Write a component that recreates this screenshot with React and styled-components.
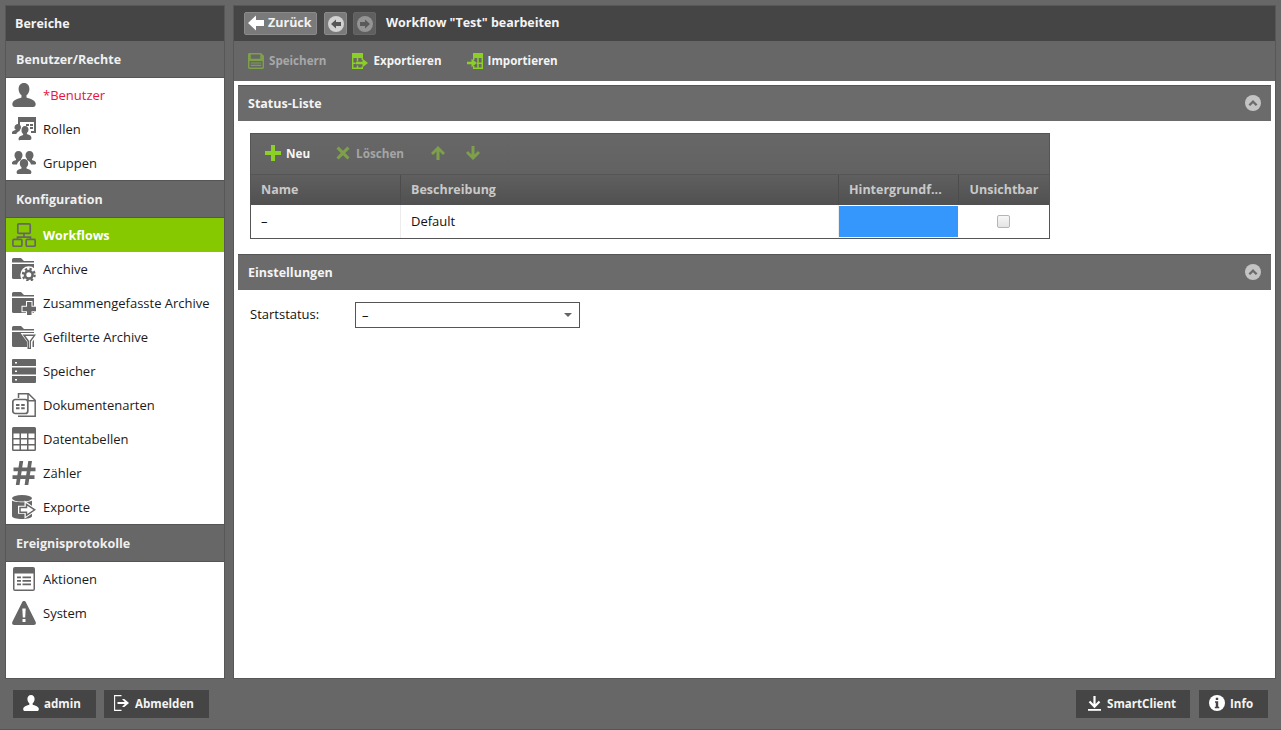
import React from "react";
import styled, { createGlobalStyle } from "styled-components";

const Global = createGlobalStyle`
  html, body { margin: 0; padding: 0; overflow: hidden; }
  body { background: #676767; font-family: "Open Sans", "Liberation Sans", sans-serif; font-size: 13px; color: #111; }
  * { box-sizing: border-box; }
`;

const Page = styled.div`
  width: 1281px; height: 730px; display: flex; flex-direction: column;
  background: #676767; border-bottom: 1px solid #555;
`;
const Workspace = styled.div`
  display: flex; gap: 8px; padding: 5px 5px 0 5px; height: 679px;
`;
const Sidebar = styled.aside`
  width: 220px; display: flex; flex-direction: column; background: #fff; border: 1px solid #575757;
`;
const TopTitle = styled.div`
  height: 35px; flex: none; display: flex; align-items: center; padding: 0 0 1px 9px;
  background: #454545; color: #f4f4f4; font-weight: 700; font-size: 12.5px;
`;
const Group = styled.div`
  height: ${p => p.$h}px; flex: none; display: flex; align-items: center; padding-left: 10px;
  background: #676767; color: #f0f0f0; font-weight: 700; font-size: 12.5px;
  border-bottom: 1px solid #555; ${p => p.$top ? "border-top: 1px solid #555;" : ""}
`;
const Item = styled.div`
  height: 34px; flex: none; display: flex; align-items: center; gap: 7px; padding-left: 6px;
  font-size: 13px; color: ${p => p.$red ? "#e8143c" : "#1a1a1a"};
  ${p => p.$active ? "background: #86c900; color: #fff; font-weight: 700; font-size: 12.5px;" : ""}
`;
const NavIcon = styled.svg`
  width: 24px; height: 24px; flex: none; fill: #666; display: block;
`;
const Main = styled.main`
  width: 1043px; display: flex; flex-direction: column; background: #fff; border: 1px solid #575757;
`;
const TitleBar = styled.div`
  height: 35px; flex: none; display: flex; align-items: center; padding-left: 10px;
  background: #454545;
`;
const BackButton = styled.div`
  width: 73px; height: 23px; display: flex; align-items: center; gap: 4px; padding: 0 0 2px 3px;
  background: #7a7a7a; border: 1px solid #8a8a8a; border-radius: 2px;
  color: #f2f2f2; font-weight: 700; font-size: 12.5px;
`;
const NavRound = styled.div`
  width: 23px; height: 23px; margin-left: ${p => p.$ml}px; display: flex; align-items: center; justify-content: center;
  background: ${p => p.$off ? "#5f5f5f" : "#7a7a7a"}; border: 1px solid ${p => p.$off ? "#666" : "#8a8a8a"}; border-radius: 2px;
`;
const PageTitle = styled.div`
  margin: 0 0 2px 10px; color: #f4f4f4; font-weight: 700; font-size: 12.5px;
`;
const ToolBar = styled.div`
  height: 40px; flex: none; display: flex; align-items: center; padding: 0 0 1px 14px; background: #676767;
`;
const ToolButton = styled.div`
  display: flex; align-items: center; gap: 5px; margin-right: ${p => p.$mr}px;
  font-weight: 700; font-size: 11.6px; color: ${p => p.$off ? "#a8a8a8" : "#f4f4f4"};
`;
const Content = styled.div`
  flex: 1; padding: 4px 4px 0 4px; display: flex; flex-direction: column;
`;
const PanelHead = styled.div`
  height: 36px; flex: none; display: flex; align-items: center; justify-content: space-between; padding: 0 10px 1px;
  background: #6b6b6b; border-top: 1px solid #555; color: #f4f4f4; font-weight: 700; font-size: 12.5px;
`;
const PanelBody = styled.div`
  padding: 12px 12px 15px;
`;
const Grid = styled.div`
  width: 800px; border: 1px solid #555;
`;
const GridTools = styled.div`
  height: 41px; display: flex; align-items: center; padding: 0 0 2px 14px;
  background: linear-gradient(#676767, #626262); border-bottom: 1px solid #555;
`;
const GridButton = styled.div`
  display: flex; align-items: center; gap: ${p => p.$g ?? 5}px; margin-right: ${p => p.$mr}px;
  font-weight: 700; font-size: 11.7px; color: ${p => p.$off ? "#a5a5a5" : "#f6f6f6"};
`;
const GridRow = styled.div`
  display: grid; grid-template-columns: 150px 438px 120px 90px;
`;
const HeadCell = styled.div`
  height: 30px; display: flex; align-items: center; padding-bottom: 1px;
  padding-left: ${p => p.$center ? 0 : 10}px; justify-content: ${p => p.$center ? "center" : "flex-start"};
  background: linear-gradient(#5f5f5f, #505050); color: #c9c9c9; font-weight: 700; font-size: 12.5px;
  border-right: ${p => p.$last ? 0 : 1}px solid #4c4c4c;
`;
const Cell = styled.div`
  height: 33px; display: flex; align-items: center; padding: 0 0 2px 10px; font-size: 13px; color: #111;
  border-right: ${p => p.$last ? 0 : 1}px solid #ececec; background: #fff;
`;
const ColorCell = styled.div`
  height: 33px; border: 1px solid #fff; border-left: 0; background: #3596fb;
`;
const CheckCell = styled.div`
  height: 33px; display: flex; align-items: center; justify-content: center; padding-right: 2px; background: #fff;
`;
const CheckBox = styled.div`
  width: 13px; height: 13px; border: 1px solid #b5b5b5; border-radius: 2px; background: linear-gradient(#f7f7f7, #e4e4e4);
`;
const FormRow = styled.div`
  display: flex; align-items: center; height: 26px;
`;
const FieldLabel = styled.div`
  width: 105px; font-size: 13px; color: #111; margin-bottom: 2px;
`;
const Select = styled.div`
  width: 225px; height: 26px; display: flex; align-items: center; justify-content: space-between;
  border: 1px solid #555; padding: 0 7px 0 6px; font-size: 13px; color: #111;
`;
const Caret = styled.div`
  width: 0; height: 0; border-left: 4.5px solid transparent; border-right: 4.5px solid transparent; border-top: 4.5px solid #666;
`;
const Footer = styled.footer`
  height: 50px; display: flex; align-items: center; justify-content: space-between; padding: 0 13px;
`;
const FootGroup = styled.div`
  display: flex; gap: ${p => p.$gap}px;
`;
const FootButton = styled.div`
  height: 28px; width: ${p => p.$w}px; display: flex; align-items: center; gap: 5px; padding: 0 0 2px ${p => p.$pl}px;
  background: #454545; color: #f4f4f4; font-weight: 700; font-size: 11.6px;
`;
const Small = styled.svg`
  width: ${p => p.$s}px; height: ${p => p.$s}px; flex: none; display: block;
`;

const Ico = ({ children }) => <NavIcon viewBox="0 0 24 24">{children}</NavIcon>;
const personD = "M12 0C8.6 0 6.6 2.6 6.6 6c0 2.8 1.3 5.2 2.9 6.3v2.2C7 15.6 1.6 16.3.5 20c-.6 2.2.2 4 2.4 4h18.2c2.2 0 3-1.8 2.4-4-1.1-3.7-6.5-4.4-9-5.5v-2.2c1.6-1.1 2.9-3.5 2.9-6.3C17.400 2.600 15.400 0 12 0z";
const Folder = () => (
  <>
    <path d="M0 2.500Q0 1 1.500 1H9l3 3h10v1.500H0z" />
    <path d="M0 7h22v15H1.500A1.500 1.500 0 0 1 0 20.500z" />
  </>
);

const icons = {
  user: <Ico><path d={personD} /></Ico>,
  roles: <Ico>
    <path d="M6 0h18v16h-5v-2h3V5H8v3H6z" />
    <path d="M14 7h3v2h-3zM18 7h3v2h-3zM18 10h3v2h-3z" />
    <path d="M6 7c1.700 0 3 1.300 3 3.200 0 1.200-.6 2.300-1.300 2.800v1c-1.500.6-3 1.500-3.400 3H1c-1 0-1.300-.8-1-1.800.5-1.500 2.600-1.700 3.500-2.200v-1C2.800 12.500 2.500 11.400 2.500 10.200 2.500 8.300 4 7 6 7z" />
    <path d="M13 9c2.200 0 3.500 1.500 3.500 3.600 0 1.400-.6 2.600-1.600 3.300v1.200c1.400.6 3.900 1 4.400 2.800.4 1.600-.1 3.100-1.600 3.100H8.300C6.800 24 6.300 22.500 6.700 20.900c.5-1.800 3-2.200 4.400-2.800v-1.200c-1-.7-1.600-1.900-1.600-3.300C9.500 10.500 10.800 9 13 9z" />
  </Ico>,
  groups: <Ico>
    <path d="M6.500 0C9 0 10.500 1.800 10.500 4.200c0 1.500-.6 2.900-1.500 3.600v1.200c-1.800.8-3.600 2.100-4 4.500H1.200C0 13.500-.3 12.500 0 11.500c.6-1.800 3-2 4-2.600V7.800C3.100 7.100 2.500 5.700 2.500 4.200 2.500 1.800 4 0 6.500 0z" />
    <path d="M17.500 0C20 0 21.500 1.800 21.500 4.200c0 1.500-.6 2.900-1.500 3.600v1.100c1 .6 3.400.8 4 2.600.3 1 0 2-1.200 2H19c-.4-2.400-2.200-3.700-4-4.500V7.800c-.9-.7-1.500-2.100-1.500-3.600C13.500 1.800 15 0 17.500 0z" />
    <path d="M12 8c2.500 0 4.200 1.800 4.200 4.400 0 1.600-.7 3-1.700 3.800v1.200c1.500.7 4.300 1 4.800 3 .4 1.500-.2 2.600-1.700 2.600H6.400c-1.500 0-2.100-1.100-1.700-2.600.5-2 3.300-2.300 4.800-3v-1.200c-1-.8-1.700-2.200-1.700-3.800C7.800 9.800 9.500 8 12 8z" />
  </Ico>,
  flow: <NavIcon viewBox="0 0 24 24" style={{ fill: "none", stroke: "#666", strokeWidth: 1.7 }}>
    <rect x="5.800" y=".9" width="12.400" height="9.400" rx="1" />
    <path d="M12 10.300v3.900M5.500 16.500v-2.300h13v2.300" />
    <rect x=".9" y="16.300" width="9" height="7" rx="1.200" />
    <rect x="14.200" y="16.300" width="9" height="7" rx="1.200" />
  </NavIcon>,
  archive: <Ico>
    <Folder />
    <circle cx="16.800" cy="17.800" r="8.500" fill="#fff" />
    <circle cx="16.800" cy="17.800" r="5.800" fill="none" stroke="#666" strokeWidth="2.400" strokeDasharray="2.300 2.250" />
    <circle cx="16.800" cy="17.800" r="3.800" fill="none" stroke="#666" strokeWidth="2.600" />
  </Ico>,
  merged: <Ico>
    <Folder />
    <path d="M15 11h4.500v4.700H24v4.500h-4.500V25H15v-4.800h-4.500v-4.500H15z" stroke="#fff" strokeWidth="2" paintOrder="stroke" />
  </Ico>,
  filtered: <Ico>
    <Folder />
    <path d="M10.500 9H25l-5.500 7.500V25h-3.500v-8.500z" fill="#fff" stroke="#fff" strokeWidth="2" />
    <path fillRule="evenodd" d="M10.500 9.500H24l-5 7V24.500h-3.500v-8zM13.500 11l3.500 4.800v7h.7v-7L21.300 11z" />
  </Ico>,
  storage: <Ico>
    <path d="M1 0h22a1 1 0 0 1 1 1v6H0V1a1 1 0 0 1 1-1zM0 8.500h24v7H0zM0 17h24v6a1 1 0 0 1-1 1H1a1 1 0 0 1-1-1z" />
    <path d="M3 3h2v1.500H3zM3 11.500h2V13H3zM3 20h2v1.500H3z" fill="#fff" />
  </Ico>,
  doc: <NavIcon viewBox="0 0 24 24" style={{ fill: "none", stroke: "#666", strokeWidth: 1.5 }}>
    <path d="M6.500 5V.8h10l6.700 6.400V23.200H6" />
    <path d="M16 .8v7h7.200" />
    <rect x=".8" y="6.500" width="15" height="14" rx="2.500" fill="#fff" strokeWidth="1.700" />
    <path d="M4 12h3.500M9.200 12h3.500M4 15.200h3.500M9.200 15.200h3.500" strokeWidth="2" />
  </NavIcon>,
  table: <Ico>
    <path fillRule="evenodd" d="M1.500 0h21A1.500 1.500 0 0 1 24 1.500v21a1.500 1.500 0 0 1-1.500 1.500h-21A1.500 1.500 0 0 1 0 22.500v-21A1.500 1.500 0 0 1 1.500 0zM1.500 6.500V11h6V6.500zM9 6.500V11h6V6.500zM16.500 6.500V11h6V6.500zM1.500 12.500V17h6v-4.500zM9 12.500V17h6v-4.500zM16.500 12.500V17h6v-4.500zM1.500 18.500v4h6v-4zM9 18.500v4h6v-4zM16.500 18.500v4h6v-4z" />
  </Ico>,
  hash: <Ico>
    <path fillRule="evenodd" d="M7.500 0h3.700l-1 6.500h5.100l1-6.500H20l-1 6.500h4.500v3.700h-5l-.7 4.100h4.700V18h-5.300l-.9 6h-3.700l.9-6H8.400l-.9 6H3.800l.9-6H.5v-3.700h4.800l.7-4.100H1.500V6.500h5zM9.700 10.200l-.7 4.100h5.100l.7-4.100z" />
  </Ico>,
  exports: <Ico>
    <ellipse cx="10" cy="3.300" rx="10" ry="3.300" />
    <path d="M0 5.500c2 2.300 18 2.300 20 0V21c0 2-4.500 3-10 3S0 23 0 21z" />
    <path d="M7.500 12.200h6.500V8.500l9 6.300-9 6.200v-3.700H7.500z" fill="#fff" stroke="#fff" strokeWidth="3" />
    <path d="M8 12.500h6.500V9.300l8.200 5.500-8.200 5.500v-3.100H8z" fill="#fff" stroke="#666" strokeWidth="1.500" />
  </Ico>,
  actions: <Ico>
    <path fillRule="evenodd" d="M3 0h18a2 2 0 0 1 2 2v20a2 2 0 0 1-2 2H3a2 2 0 0 1-2-2V2a2 2 0 0 1 2-2zM2.500 6.500v16h19v-16zM5 9.500h4v1.800H5zM10.500 9.500H19v1.800h-8.500zM5 13h4v1.800H5zM10.500 13H19v1.800h-8.500zM5 16.500h4v1.800H5zM10.500 16.500H19v1.800h-8.500z" />
  </Ico>,
  warn: <Ico>
    <path fillRule="evenodd" d="M12 0c.9 0 1.500.5 2 1.400l9.600 19.400c.8 1.700 0 3.200-1.800 3.200H2.200C.4 24-.4 22.500.4 20.800L10 1.400C10.500.5 11.100 0 12 0zM10.300 7.500l.5 9h2.400l.5-9zM10.500 18v3h3v-3z" />
  </Ico>,
};

const nav = [
  { type: "top", label: "Bereiche" },
  { type: "group", label: "Benutzer/Rechte", h: 37 },
  { label: "*Benutzer", icon: "user", red: true },
  { label: "Rollen", icon: "roles" },
  { label: "Gruppen", icon: "groups" },
  { type: "group", label: "Konfiguration", h: 38, top: true },
  { label: "Workflows", icon: "flow", active: true },
  { label: "Archive", icon: "archive" },
  { label: "Zusammengefasste Archive", icon: "merged" },
  { label: "Gefilterte Archive", icon: "filtered" },
  { label: "Speicher", icon: "storage" },
  { label: "Dokumentenarten", icon: "doc" },
  { label: "Datentabellen", icon: "table" },
  { label: "Zähler", icon: "hash" },
  { label: "Exporte", icon: "exports" },
  { type: "group", label: "Ereignisprotokolle", h: 38, top: true },
  { label: "Aktionen", icon: "actions" },
  { label: "System", icon: "warn" },
];

const Collapse = () => (
  <Small $s={16} viewBox="0 0 16 16">
    <circle cx="8" cy="8" r="8" fill="#c4c4c4" />
    <path d="M3.500 9.500L8 5l4.500 4.500-1.700 1.500L8 8.300 5.200 11z" fill="#6b6b6b" />
  </Small>
);

const GREEN = "#8ccf25";
const ExportIcon = () => (
  <Small $s={16} viewBox="0 0 16 16">
    <path d="M0 0h11v5H0z" fill={GREEN} />
    <path d="M.7 5v10.300h9.600V13.500M.7 10.200h3M5.500 5v3.500M5.500 12.500v2.800M10.300 5v2" fill="none" stroke={GREEN} strokeWidth="1.500" />
    <path d="M4 8.700h6.500V5.800L16 10l-5.500 4.200v-2.900H4z" fill={GREEN} />
  </Small>
);
const ImportIcon = () => (
  <Small $s={16} viewBox="0 0 16 16">
    <path d="M6 0h10v5H6z" fill={GREEN} />
    <path d="M6.700 5v2M6.700 13v2.300h8.600V5M11 5v10.300M10 10.200h5" fill="none" stroke={GREEN} strokeWidth="1.500" />
    <path d="M0 8.700h4.500V5.800L10 10l-5.500 4.200v-2.900H0z" fill={GREEN} />
  </Small>
);

export default function App() {
  return (
    <Page>
      <Global />
      <Workspace>
        <Sidebar>
          {nav.map((n, i) => {
            if (n.type === "top") return <TopTitle key={i}>{n.label}</TopTitle>;
            if (n.type === "group") return <Group key={i} $h={n.h} $top={n.top}>{n.label}</Group>;
            return (
              <Item key={i} $red={n.red} $active={n.active}>
                {icons[n.icon]}
                <span>{n.label}</span>
              </Item>
            );
          })}
        </Sidebar>
        <Main>
          <TitleBar>
            <BackButton>
              <Small $s={16} viewBox="0 0 16 16">
                <path d="M0 8l8-7.500V5h8v6H8v4.500z" fill="#fff" />
              </Small>
              Zurück
            </BackButton>
            <NavRound $ml={7}>
              <Small $s={16} viewBox="0 0 16 16">
                <circle cx="8" cy="8" r="8" fill="#d2d2d2" />
                <path d="M3 8l5-4.500V6h5v4H8v2.500z" fill="#555" />
              </Small>
            </NavRound>
            <NavRound $ml={6} $off>
              <Small $s={16} viewBox="0 0 16 16">
                <circle cx="8" cy="8" r="8" fill="#949494" />
                <path d="M13 8L8 3.500V6H3v4h5v2.500z" fill="#5a5a5a" />
              </Small>
            </NavRound>
            <PageTitle>Workflow "Test" bearbeiten</PageTitle>
          </TitleBar>
          <ToolBar>
            <ToolButton $off $mr={26}>
              <Small $s={16} viewBox="0 0 17 17">
                <path fillRule="evenodd" d="M1.500 0H14l3 3v12.500a1.500 1.500 0 0 1-1.500 1.500h-14A1.500 1.500 0 0 1 0 15.500v-14A1.500 1.500 0 0 1 1.500 0zM3 1.500V6h10V1.500zM1.500 8.500V15.500h14V8.500zM3 10h11v1.200H3zM3 12.500h11v1.200H3z" fill="#7ea04a" />
              </Small>
              Speichern
            </ToolButton>
            <ToolButton $mr={25}><ExportIcon />Exportieren</ToolButton>
            <ToolButton $mr={0}><ImportIcon />Importieren</ToolButton>
          </ToolBar>
          <Content>
            <PanelHead>Status-Liste<Collapse /></PanelHead>
            <PanelBody>
              <Grid>
                <GridTools>
                  <GridButton $mr={26}>
                    <Small $s={16} viewBox="0 0 16 16"><path d="M6 0h4v6h6v4h-6v6H6v-6H0V6h6z" fill={GREEN} /></Small>
                    Neu
                  </GridButton>
                  <GridButton $off $mr={26} $g={6}>
                    <Small $s={14} viewBox="0 0 16 16"><path d="M3 .5L8 5.500l5-5L15.500 3l-5 5 5 5-2.500 2.500-5-5-5 5L.5 13l5-5-5-5z" fill="#7ea04a" /></Small>
                    Löschen
                  </GridButton>
                  <GridButton $mr={19}>
                    <Small $s={16} viewBox="0 0 16 16"><path d="M8 1l7 7-2 2-3.500-3.500V15h-3V6.500L3 10 1 8z" fill="#7ea04a" /></Small>
                  </GridButton>
                  <GridButton $mr={0}>
                    <Small $s={16} viewBox="0 0 16 16"><path d="M8 15L1 8l2-2 3.500 3.500V1h3v8.500L13 6l2 2z" fill="#7ea04a" /></Small>
                  </GridButton>
                </GridTools>
                <GridRow>
                  <HeadCell>Name</HeadCell>
                  <HeadCell>Beschreibung</HeadCell>
                  <HeadCell>Hintergrundf...</HeadCell>
                  <HeadCell $center $last>Unsichtbar</HeadCell>
                </GridRow>
                <GridRow>
                  <Cell>–</Cell>
                  <Cell>Default</Cell>
                  <ColorCell />
                  <CheckCell><CheckBox /></CheckCell>
                </GridRow>
              </Grid>
            </PanelBody>
            <PanelHead>Einstellungen<Collapse /></PanelHead>
            <PanelBody>
              <FormRow>
                <FieldLabel>Startstatus:</FieldLabel>
                <Select>–<Caret /></Select>
              </FormRow>
            </PanelBody>
          </Content>
        </Main>
      </Workspace>
      <Footer>
        <FootGroup $gap={8}>
          <FootButton $w={83} $pl={10}>
            <Small $s={16} viewBox="0 0 24 24"><path d={personD} fill="#fff" /></Small>
            admin
          </FootButton>
          <FootButton $w={105} $pl={10}>
            <Small $s={16} viewBox="0 0 16 16">
              <path d="M7.500.6H.6v14.800h6.900" fill="none" stroke="#fff" strokeWidth="1.100" />
              <path d="M3.500 7h7.300L8 4h2.300L15 8l-4.700 4H8l2.800-3H3.500z" fill="#fff" />
            </Small>
            Abmelden
          </FootButton>
        </FootGroup>
        <FootGroup $gap={9}>
          <FootButton $w={114} $pl={11}>
            <Small $s={15} viewBox="0 0 15 15">
              <path d="M7.500 0v10.500M2.500 5.500l5 5.200 5-5.200" fill="none" stroke="#fff" strokeWidth="2.200" />
              <path d="M1 13h13v1.800H1z" fill="#fff" />
            </Small>
            SmartClient
          </FootButton>
          <FootButton $w={69} $pl={10}>
            <Small $s={16} viewBox="0 0 16 16">
              <circle cx="8" cy="8" r="8" fill="#fff" />
              <path d="M6.800 2.700h2.400v2.300H6.800zM6 6.300h3.200v5.400H10.200v1.500H5.800v-1.500H6.800V7.800H6z" fill="#454545" />
            </Small>
            Info
          </FootButton>
        </FootGroup>
      </Footer>
    </Page>
  );
}
